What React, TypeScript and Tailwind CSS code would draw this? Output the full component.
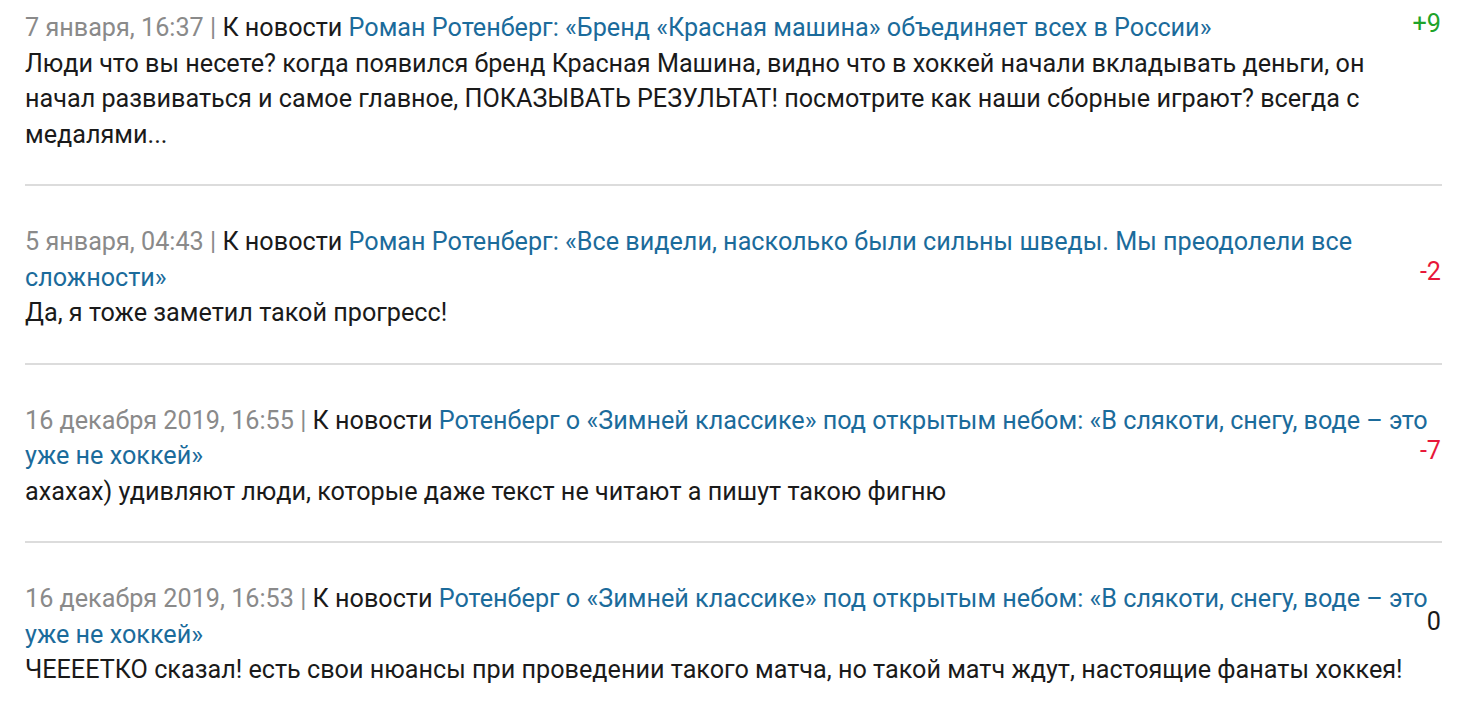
const comments = [
  {
    date: "7 января, 16:37",
    title: "Роман Ротенберг: «Бренд «Красная машина» объединяет всех в России»",
    text: "Люди что вы несете? когда появился бренд Красная Машина, видно что в хоккей начали вкладывать деньги, он начал развиваться и самое главное, ПОКАЗЫВАТЬ РЕЗУЛЬТАТ! посмотрите как наши сборные играют? всегда с медалями...",
    score: "+9",
    scoreClass: "text-[#1fa32a] top-[12px]",
    pad: "pt-[10px]",
  },
  {
    date: "5 января, 04:43",
    title: "Роман Ротенберг: «Все видели, насколько были сильны шведы. Мы преодолели все сложности»",
    text: "Да, я тоже заметил такой прогресс!",
    score: "-2",
    scoreClass: "text-[#e8173a] top-[74px]",
    pad: "pt-[38px]",
  },
  {
    date: "16 декабря 2019, 16:55",
    title: "Ротенберг о «Зимней классике» под открытым небом: «В слякоти, снегу, воде – это уже не хоккей»",
    text: "ахахах) удивляют люди, которые даже текст не читают а пишут такою фигню",
    score: "-7",
    scoreClass: "text-[#e8173a] top-[74px]",
    pad: "pt-[38px]",
  },
  {
    date: "16 декабря 2019, 16:53",
    title: "Ротенберг о «Зимней классике» под открытым небом: «В слякоти, снегу, воде – это уже не хоккей»",
    text: "ЧЕЕЕЕТКО сказал! есть свои нюансы при проведении такого матча, но такой матч ждут, настоящие фанаты хоккея!",
    score: "0",
    scoreClass: "text-[#1a1a1a] top-[67px]",
    pad: "pt-[38px]",
  },
];

export default function App() {
  return (
    <div className="w-full min-h-screen bg-white font-['Roboto',sans-serif] text-[25.2px] leading-[35.5px] text-[#1a1a1a]">
      <div className="ml-[25px] mr-[18px]">
        {comments.map((c, i) => (
          <div
            key={i}
            className={`relative pb-[32px] border-b-2 border-[#dcdcdc] ${c.pad}`}
          >
            <div className="pr-[10px]">
              <span className="text-[#8a8a8a]">{c.date} | </span>
              <span>К новости </span>
              <a href="#" className="text-[#1b6b9b]">{c.title}</a>
            </div>
            <p className="pr-[10px]">{c.text}</p>
            <span className={`absolute right-[1px] leading-[24px] ${c.scoreClass}`}>{c.score}</span>
          </div>
        ))}
      </div>
    </div>
  );
}
